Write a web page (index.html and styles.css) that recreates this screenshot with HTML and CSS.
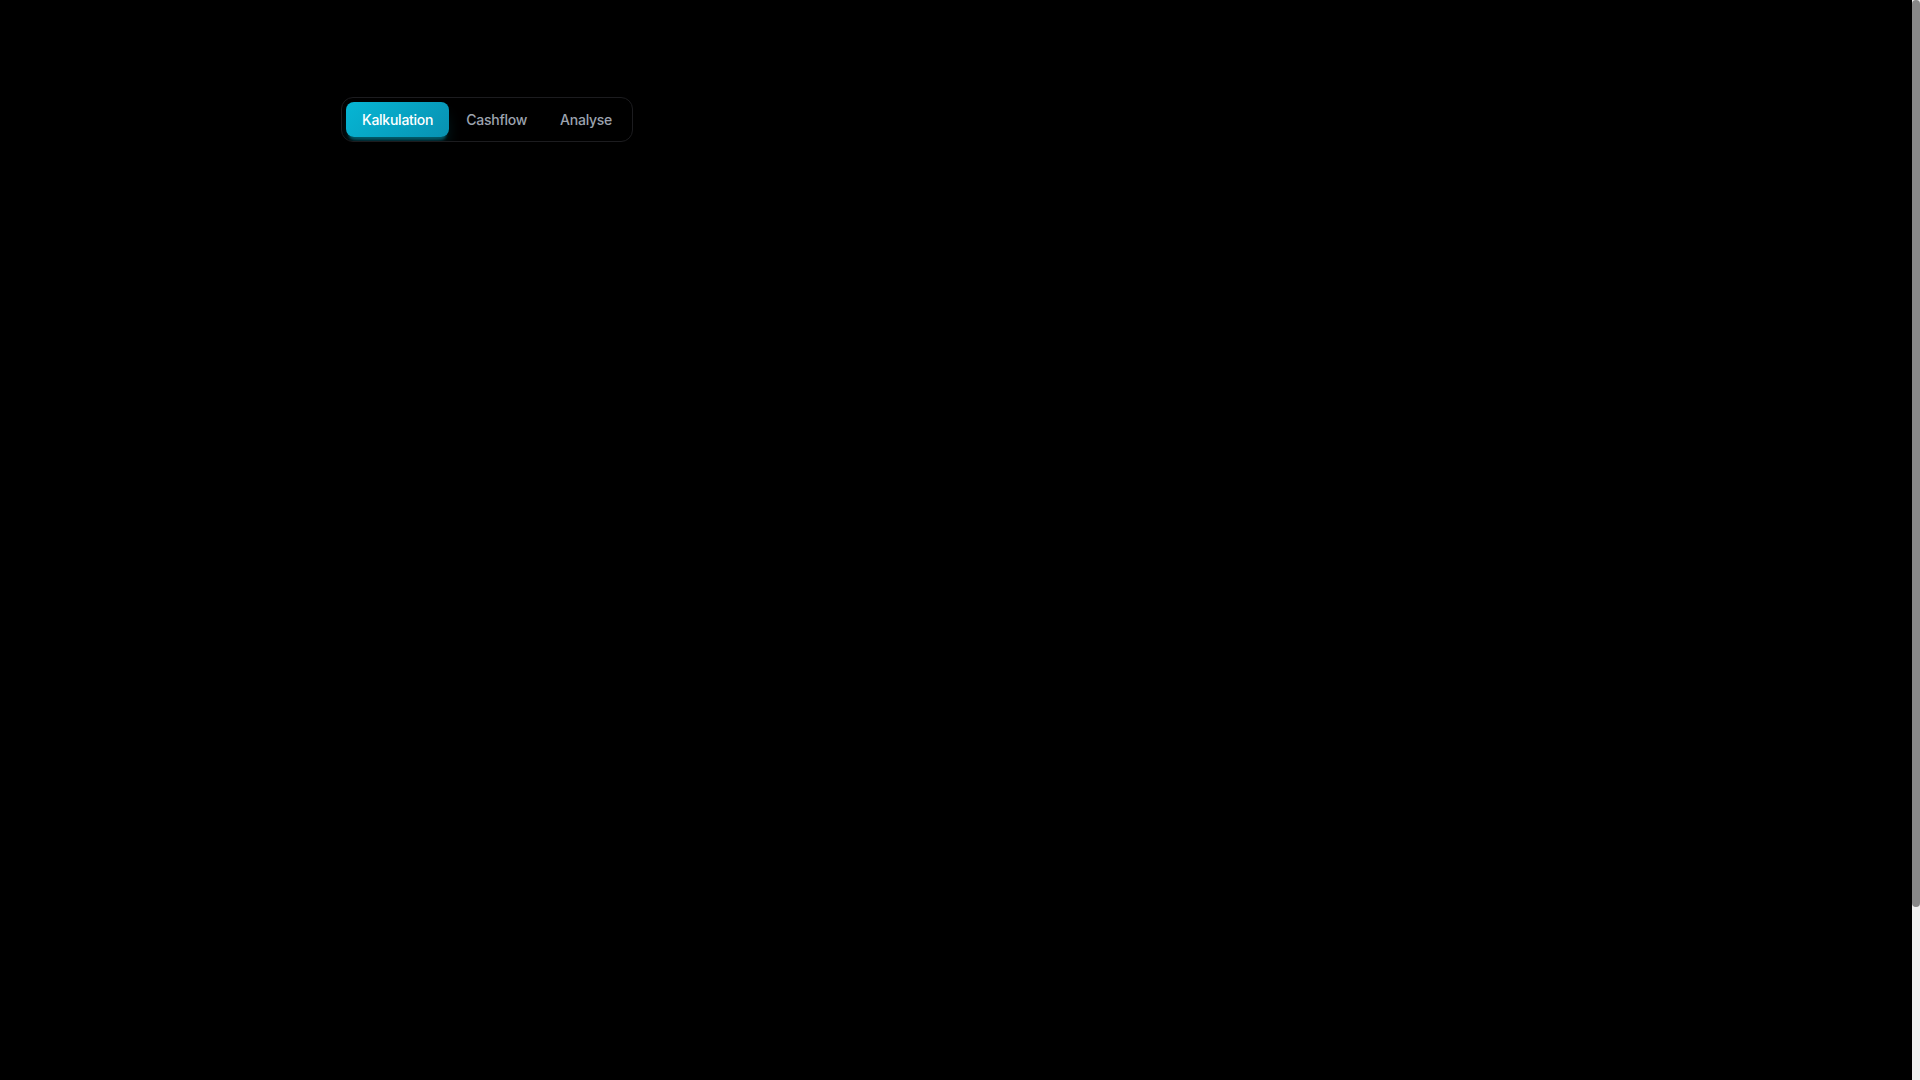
FILE: index.html
```html
<!DOCTYPE html>
<html lang="de">
<head>
<meta charset="utf-8">
<title>Kalkulation</title>
<link rel="stylesheet" href="styles.css">
</head>
<body>
<div class="scroller">
  <main class="page">
    <div class="wrap">
      <nav class="tabs">
        <button class="tab active">Kalkulation</button>
        <button class="tab">Cashflow</button>
        <button class="tab">Analyse</button>
      </nav>
    </div>
  </main>
</div>
<div class="scrollbar" aria-hidden="true"><div class="scrollbar-thumb"></div></div>
</body>
</html>
```
FILE: styles.css
```css
html, body {
  margin: 0;
  padding: 0;
  height: 100%;
  overflow: hidden;
  background: #000;
}
body {
  font-family: Inter, "Liberation Sans", sans-serif;
  color: #fff;
}
.scroller {
  height: 100vh;
  overflow-y: auto;
  padding-right: 8px;
  box-sizing: border-box;
}
.page {
  min-height: 1287px;
  box-sizing: border-box;
  padding-top: 97px;
}
.wrap {
  max-width: 1280px;
  margin: 0 auto;
  padding: 0 24px;
  box-sizing: border-box;
}
.tabs {
  display: inline-flex;
  gap: 1px;
  padding: 4px;
  border: 1px solid #1c1c1f;
  border-radius: 12px;
  background: #000;
  overflow: hidden;
  margin-left: 1px;
}
.tab {
  font-family: Inter, "Liberation Sans", sans-serif;
  font-size: 14px;
  font-weight: 500;
  letter-spacing: -0.25px;
  line-height: 19px;
  padding: 8px 16px;
  border: 0;
  border-radius: 8px;
  background: transparent;
  color: #9ca3af;
  cursor: pointer;
}
.tab.active {
  color: #fff;
  background: linear-gradient(135deg, #06b6d4, #0891b2);
  box-shadow: 0 6px 3px -3px rgba(6, 182, 212, 0.4), 0 10px 15px -3px rgba(6, 182, 212, 0.2);
}
.scrollbar {
  position: fixed;
  top: 0;
  right: 0;
  width: 8px;
  height: 100vh;
  background: #f1f1f1;
}
.scrollbar-thumb {
  height: 907px;
  background: #888;
  border-radius: 4px;
}
```
